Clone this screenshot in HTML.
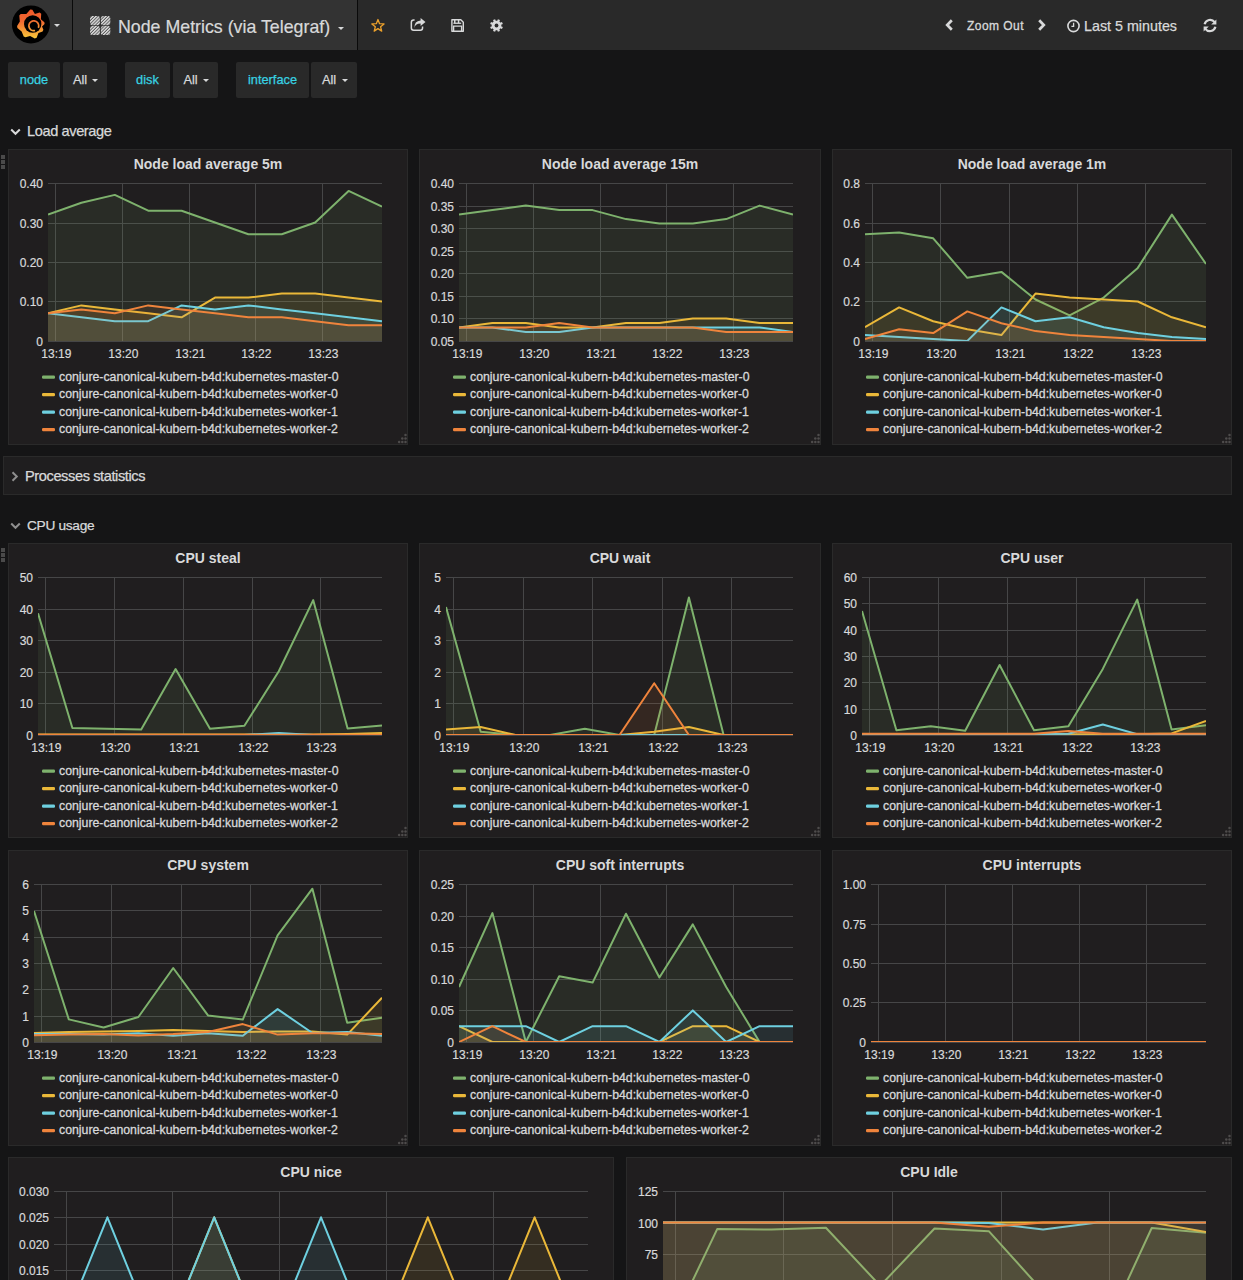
<!DOCTYPE html>
<html><head><meta charset="utf-8"><title>Node Metrics (via Telegraf)</title>
<style>
*{margin:0;padding:0;box-sizing:border-box}
html,body{width:1243px;height:1280px;overflow:hidden;background:#151516;font-family:"Liberation Sans", sans-serif;color:#d8d9da}
body{position:relative}
#nav{position:absolute;left:0;top:0;width:1243px;height:50px;background:#292929}
#navleft{position:absolute;left:0;top:0;width:357px;height:50px;background:#333333}
.vdiv{position:absolute;top:0;width:1px;height:50px;background:#0a0a0a}
.caret{position:absolute;width:0;height:0;border-left:3px solid transparent;border-right:3px solid transparent;border-top:3px solid #d8d9da}
.htitle{position:absolute;left:118px;top:16px;font-size:17.8px;line-height:22px;white-space:nowrap;color:#d8d9da;-webkit-text-stroke:0.2px #d8d9da}
.zoomout{position:absolute;left:967px;top:17.5px;font-size:12px;letter-spacing:0.45px;line-height:16px;white-space:nowrap;-webkit-text-stroke:0.3px #d8d9da}
.last5{position:absolute;left:1084px;top:17px;font-size:14.3px;line-height:18px;white-space:nowrap;-webkit-text-stroke:0.25px #d8d9da}
.vbox{position:absolute;top:62px;height:36px;background:#292929;border-radius:2px;font-size:12.8px;line-height:36px;text-align:center;white-space:nowrap;-webkit-text-stroke:0.25px currentColor}
.vl{color:#38d2e2}
.va{color:#d8d9da;position:relative;left:-5px}
.vc{position:absolute;right:9px;top:17px;width:0;height:0;border-left:3px solid transparent;border-right:3px solid transparent;border-top:3px solid #d8d9da}
.rowt{position:absolute;font-size:14.6px;letter-spacing:-0.4px;line-height:18px;white-space:nowrap;color:#d8d9da;-webkit-text-stroke:0.25px #d8d9da}
.chev{position:absolute}
#procrow{position:absolute;left:3px;top:456px;width:1229px;height:39px;background:#1f1e1f;border:1px solid #2a2a2a}
.dh{position:absolute;left:1px;width:4px;height:4px;background:#4a4a4a}
.panel{position:absolute;background:#201e1f;border:1px solid #2a2a2a;box-sizing:content-box}
svg.chart{position:absolute;overflow:visible}
.title{font-family:"Liberation Sans", sans-serif;font-size:14px;font-weight:bold;fill:#d8d9da}
.ax{font-family:"Liberation Sans", sans-serif;font-size:12px;fill:#d8d9da;stroke:#d8d9da;stroke-width:0.2px}
.lg{font-family:"Liberation Sans", sans-serif;font-size:12.3px;fill:#d8d9da;stroke:#d8d9da;stroke-width:0.3px}
.g{stroke:#464647;stroke-width:1}
</style></head>
<body>

<div id="nav"></div>
<div id="navleft"></div>
<div class="vdiv" style="left:72px"></div>
<div class="vdiv" style="left:357px"></div>
<svg style="position:absolute;left:10px;top:4px" width="42" height="42" viewBox="0 0 42 42">
  <defs><linearGradient id="lg" x1="0" y1="0" x2="0" y2="1">
    <stop offset="0" stop-color="#f05a2a"/><stop offset="0.4" stop-color="#f06832"/><stop offset="1" stop-color="#f8c83a"/></linearGradient>
    <linearGradient id="lg2" gradientUnits="userSpaceOnUse" x1="0" y1="14" x2="0" y2="28">
    <stop offset="0" stop-color="#f05e2c"/><stop offset="1" stop-color="#f5a83a"/></linearGradient></defs>
  <circle cx="20.9" cy="20.4" r="19" fill="#000"/>
  <path fill="url(#lg)" d="M20.28,5.61 L22.37,5.68 L24.89,9.96 L29.62,8.46 L31.22,9.81 L30.87,15.25 L34.39,18.20 L34.59,20.12 L32.03,22.58 L33.41,25.69 L32.58,27.40 L28.43,29.07 L26.66,33.76 L24.77,34.44 L20.10,31.98 L15.41,33.30 L13.69,32.43 L11.64,27.38 L7.41,23.94 L7.08,22.04 L9.84,17.46 L9.30,11.61 L10.66,10.10 L16.35,10.11 Z"/>
  <circle cx="22.7" cy="20.0" r="8.7" fill="#000"/>
  <path d="M25.07,26.53 L24.42,26.66 L23.76,26.70 L23.10,26.65 L22.45,26.51 L21.83,26.29 L21.24,25.98 L20.70,25.59 L20.22,25.14 L19.80,24.63 L19.45,24.06 L19.19,23.46 L19.01,22.82 L18.91,22.16 L18.91,21.50 L18.99,20.84 L19.17,20.20 L19.42,19.59 L19.76,19.02 L20.17,18.51 L20.65,18.05 L21.19,17.66 L21.77,17.34 L22.39,17.11 L23.03,16.96 L23.69,16.90 L24.35,16.93 L25.01,17.05 L25.64,17.26 L26.23,17.55 L26.78,17.91 L27.28,18.35 L27.71,18.85 L28.08,19.41 L28.36,20.00 L28.56,20.64 L28.67,21.29 L28.70,21.95 L28.63,22.61 L28.48,23.25 L28.24,23.87" fill="none" stroke="url(#lg2)" stroke-width="1.7"/>
  
</svg>
<div class="caret" style="left:54px;top:24px"></div>
<svg style="position:absolute;left:89px;top:16px" width="22" height="20" viewBox="0 0 22 20">
  <defs><pattern id="hatch" width="2.3" height="2.3" patternUnits="userSpaceOnUse" patternTransform="rotate(45)">
    <rect width="2.3" height="2.3" fill="#5a5a5a"/><rect width="1.3" height="2.3" fill="#e2e2e2"/></pattern></defs>
  <rect x="1.1" y="0.1" width="9.8" height="9.2" rx="2.2" fill="url(#hatch)"/>
  <rect x="11.9" y="0.1" width="9.4" height="9.2" rx="2.2" fill="url(#hatch)"/>
  <rect x="1.1" y="10" width="9.8" height="9.1" rx="2.2" fill="url(#hatch)"/>
  <rect x="11.9" y="10" width="9.4" height="9.1" rx="2.2" fill="url(#hatch)"/>
</svg>
<div class="htitle">Node Metrics (via Telegraf)</div>
<div class="caret" style="left:338px;top:27px"></div>
<svg style="position:absolute;left:369px;top:17px" width="18" height="17" viewBox="0 0 18 17">
  <path d="M8.95,2.50 L10.57,6.68 L15.04,6.92 L11.57,9.75 L12.71,14.08 L8.95,11.65 L5.19,14.08 L6.33,9.75 L2.86,6.92 L7.33,6.68 Z" fill="none" stroke="#eba02b" stroke-width="1.3" stroke-linejoin="round"/>
</svg>
<svg style="position:absolute;left:409px;top:17px" width="18" height="16" viewBox="0 0 18 16">
  <path d="M5.6,3.05 L4.6,3.05 Q2.35,3.05 2.35,5.3 L2.35,11 Q2.35,13.15 4.6,13.15 L11.4,13.15 Q13.55,13.15 13.55,11 L13.55,9.6" fill="none" stroke="#d8d9da" stroke-width="1.5"/>
  <path d="M5.4,11.2 Q5.8,6.6 11.6,6.4 L11.6,9.0 L16.5,5.0 L11.6,1.0 L11.6,3.5 Q5.2,3.9 5.4,11.2 Z" fill="#d8d9da"/>
</svg>
<svg style="position:absolute;left:450px;top:18px" width="16" height="16" viewBox="0 0 16 16">
  <path d="M1.9,1.8 L10.8,1.8 L13.3,4.3 L13.3,13.3 L1.9,13.3 Z" fill="none" stroke="#d8d9da" stroke-width="1.4" stroke-linejoin="round"/>
  <rect x="4.0" y="2" width="1.5" height="3.1" fill="#d8d9da"/><rect x="7.8" y="2" width="1.5" height="3.1" fill="#d8d9da"/>
  <rect x="3.4" y="4.6" width="7.8" height="1.3" fill="#d8d9da"/>
  <path d="M3.6,13.1 L3.6,8.1 L11.6,8.1 L11.6,13.1" fill="none" stroke="#d8d9da" stroke-width="1.4"/>
</svg>
<svg style="position:absolute;left:489px;top:18px" width="16" height="16" viewBox="0 0 16 16">
  <path fill="#d8d9da" d="M12.05,8.18 L13.85,8.89 L12.97,11.00 L11.20,10.23 L10.23,11.20 L11.00,12.97 L8.89,13.85 L8.18,12.05 L6.82,12.05 L6.11,13.85 L4.00,12.97 L4.77,11.20 L3.80,10.23 L2.03,11.00 L1.15,8.89 L2.95,8.18 L2.95,6.82 L1.15,6.11 L2.03,4.00 L3.80,4.77 L4.77,3.80 L4.00,2.03 L6.11,1.15 L6.82,2.95 L8.18,2.95 L8.89,1.15 L11.00,2.03 L10.23,3.80 L11.20,4.77 L12.97,4.00 L13.85,6.11 L12.05,6.82 Z"/><circle cx="7.5" cy="7.5" r="4.8" fill="#d8d9da"/><circle cx="7.5" cy="7.5" r="1.9" fill="#2a2a2a"/>
</svg>
<svg style="position:absolute;left:943px;top:18px" width="12" height="14" viewBox="0 0 12 14">
  <path d="M8.8,2.2 L4.2,7 L8.8,11.8" fill="none" stroke="#d8d9da" stroke-width="2.7"/>
</svg>
<div class="zoomout">Zoom Out</div>
<svg style="position:absolute;left:1036px;top:18px" width="12" height="14" viewBox="0 0 12 14">
  <path d="M3.2,2.2 L7.8,7 L3.2,11.8" fill="none" stroke="#d8d9da" stroke-width="2.7"/>
</svg>
<svg style="position:absolute;left:1066px;top:19px" width="15" height="14" viewBox="0 0 15 14">
  <circle cx="7.5" cy="7" r="5.6" fill="none" stroke="#d8d9da" stroke-width="1.6"/>
  <path d="M7.6,3.8 L7.6,7.3 L5.4,7.3" fill="none" stroke="#d8d9da" stroke-width="1.3"/>
</svg>
<div class="last5">Last 5 minutes</div>
<svg style="position:absolute;left:1202px;top:18px" width="16" height="15" viewBox="0 0 16 15">
  <path d="M2.6,6.2 A5.6,5.6 0 0 1 12.6,4.2" fill="none" stroke="#d8d9da" stroke-width="2.2"/>
  <path d="M14.4,1.4 L14.4,6.6 L9.2,6.6 Z" fill="#d8d9da"/>
  <path d="M13.4,8.8 A5.6,5.6 0 0 1 3.4,10.8" fill="none" stroke="#d8d9da" stroke-width="2.2"/>
  <path d="M1.6,13.6 L1.6,8.4 L6.8,8.4 Z" fill="#d8d9da"/>
</svg>


<div class="vbox" style="left:8px;width:52px"><span class="vl">node</span></div>
<div class="vbox" style="left:63px;width:44px"><span class="va">All</span><i class="vc"></i></div>
<div class="vbox" style="left:125px;width:45px"><span class="vl">disk</span></div>
<div class="vbox" style="left:173px;width:45px"><span class="va">All</span><i class="vc"></i></div>
<div class="vbox" style="left:236px;width:73px"><span class="vl">interface</span></div>
<div class="vbox" style="left:311px;width:46px"><span class="va">All</span><i class="vc"></i></div>


<svg class="chev" style="left:10px;top:128px" width="11" height="8" viewBox="0 0 11 8"><path d="M1.2,1.5 L5.5,5.8 L9.8,1.5" fill="none" stroke="#d8d9da" stroke-width="2"/></svg>
<div class="rowt" style="left:27px;top:122px">Load average</div>
<div class="dh" style="top:155px"></div><div class="dh" style="top:160px"></div><div class="dh" style="top:165px"></div>
<div id="procrow"></div>
<svg class="chev" style="left:11px;top:471px" width="8" height="11" viewBox="0 0 8 11"><path d="M1.5,1.2 L5.8,5.5 L1.5,9.8" fill="none" stroke="#8e8e8e" stroke-width="2"/></svg>
<div class="rowt" style="left:25px;top:467px">Processes statistics</div>
<svg class="chev" style="left:10px;top:522px" width="11" height="8" viewBox="0 0 11 8"><path d="M1.2,1.5 L5.5,5.8 L9.8,1.5" fill="none" stroke="#8e8e8e" stroke-width="2"/></svg>
<div class="rowt" style="left:27px;top:516.5px;font-size:13.7px;letter-spacing:-0.3px">CPU usage</div>
<div class="dh" style="top:548px"></div><div class="dh" style="top:553px"></div><div class="dh" style="top:558px"></div>

<div class="panel" style="left:8px;top:149px;width:398px;height:294px"></div>
<svg class="chart" style="left:8px;top:149px" width="400" height="296" viewBox="0 0 400 296">
<text x="200.0" y="20" class="title" text-anchor="middle">Node load average 5m</text>
<line x1="40" x2="374" y1="192.5" y2="192.5" class="g"/>
<text x="35" y="196.8" class="ax" text-anchor="end">0</text>
<line x1="40" x2="374" y1="152.5" y2="152.5" class="g"/>
<text x="35" y="156.8" class="ax" text-anchor="end">0.10</text>
<line x1="40" x2="374" y1="113.5" y2="113.5" class="g"/>
<text x="35" y="117.8" class="ax" text-anchor="end">0.20</text>
<line x1="40" x2="374" y1="74.5" y2="74.5" class="g"/>
<text x="35" y="78.8" class="ax" text-anchor="end">0.30</text>
<line x1="40" x2="374" y1="34.5" y2="34.5" class="g"/>
<text x="35" y="38.8" class="ax" text-anchor="end">0.40</text>
<line x1="47.5" x2="47.5" y1="34" y2="192" class="g"/>
<text x="48.3" y="209" class="ax" text-anchor="middle">13:19</text>
<line x1="114.5" x2="114.5" y1="34" y2="192" class="g"/>
<text x="115.3" y="209" class="ax" text-anchor="middle">13:20</text>
<line x1="181.5" x2="181.5" y1="34" y2="192" class="g"/>
<text x="182.3" y="209" class="ax" text-anchor="middle">13:21</text>
<line x1="247.5" x2="247.5" y1="34" y2="192" class="g"/>
<text x="248.3" y="209" class="ax" text-anchor="middle">13:22</text>
<line x1="314.5" x2="314.5" y1="34" y2="192" class="g"/>
<text x="315.3" y="209" class="ax" text-anchor="middle">13:23</text>
<clipPath id="c8_149"><rect x="40" y="32" width="334" height="160"/></clipPath>
<g clip-path="url(#c8_149)">
<path d="M40.0,192.0 L40.0,65.6 L73.4,53.8 L106.8,45.9 L140.2,61.7 L173.6,61.7 L207.0,73.5 L240.4,85.3 L273.8,85.3 L307.2,73.5 L340.6,41.9 L374.0,57.7 L374.0,192.0 Z" fill="#7eb26d" fill-opacity="0.1"/>
<path d="M40.0,65.6 L73.4,53.8 L106.8,45.9 L140.2,61.7 L173.6,61.7 L207.0,73.5 L240.4,85.3 L273.8,85.3 L307.2,73.5 L340.6,41.9 L374.0,57.7" fill="none" stroke="#7eb26d" stroke-width="2" stroke-linejoin="round"/>
<path d="M40.0,192.0 L40.0,164.3 L73.4,156.4 L106.8,160.4 L140.2,164.3 L173.6,168.3 L207.0,148.6 L240.4,148.6 L273.8,144.6 L307.2,144.6 L340.6,148.6 L374.0,152.5 L374.0,192.0 Z" fill="#eab839" fill-opacity="0.1"/>
<path d="M40.0,164.3 L73.4,156.4 L106.8,160.4 L140.2,164.3 L173.6,168.3 L207.0,148.6 L240.4,148.6 L273.8,144.6 L307.2,144.6 L340.6,148.6 L374.0,152.5" fill="none" stroke="#eab839" stroke-width="2" stroke-linejoin="round"/>
<path d="M40.0,192.0 L40.0,164.3 L73.4,168.3 L106.8,172.2 L140.2,172.2 L173.6,156.4 L207.0,160.4 L240.4,156.4 L273.8,160.4 L307.2,164.3 L340.6,168.3 L374.0,172.2 L374.0,192.0 Z" fill="#6ed0e0" fill-opacity="0.1"/>
<path d="M40.0,164.3 L73.4,168.3 L106.8,172.2 L140.2,172.2 L173.6,156.4 L207.0,160.4 L240.4,156.4 L273.8,160.4 L307.2,164.3 L340.6,168.3 L374.0,172.2" fill="none" stroke="#6ed0e0" stroke-width="2" stroke-linejoin="round"/>
<path d="M40.0,192.0 L40.0,164.3 L73.4,160.4 L106.8,164.3 L140.2,156.4 L173.6,160.4 L207.0,164.3 L240.4,168.3 L273.8,168.3 L307.2,172.2 L340.6,176.2 L374.0,176.2 L374.0,192.0 Z" fill="#ef843c" fill-opacity="0.1"/>
<path d="M40.0,164.3 L73.4,160.4 L106.8,164.3 L140.2,156.4 L173.6,160.4 L207.0,164.3 L240.4,168.3 L273.8,168.3 L307.2,172.2 L340.6,176.2 L374.0,176.2" fill="none" stroke="#ef843c" stroke-width="2" stroke-linejoin="round"/>
</g>
<rect x="34" y="226.5" width="13" height="3.2" rx="1.2" fill="#7eb26d"/>
<text x="51" y="231.5" class="lg">conjure-canonical-kubern-b4d:kubernetes-master-0</text>
<rect x="34" y="244.0" width="13" height="3.2" rx="1.2" fill="#eab839"/>
<text x="51" y="249.0" class="lg">conjure-canonical-kubern-b4d:kubernetes-worker-0</text>
<rect x="34" y="261.5" width="13" height="3.2" rx="1.2" fill="#6ed0e0"/>
<text x="51" y="266.5" class="lg">conjure-canonical-kubern-b4d:kubernetes-worker-1</text>
<rect x="34" y="279.0" width="13" height="3.2" rx="1.2" fill="#ef843c"/>
<text x="51" y="284.0" class="lg">conjure-canonical-kubern-b4d:kubernetes-worker-2</text>
<circle cx="397.5" cy="293" r="1.25" fill="#4e4c4c"/>
<circle cx="394.3" cy="293" r="1.25" fill="#4e4c4c"/>
<circle cx="391.1" cy="293" r="1.25" fill="#4e4c4c"/>
<circle cx="397.5" cy="289.6" r="1.25" fill="#4e4c4c"/>
<circle cx="394.3" cy="289.6" r="1.25" fill="#4e4c4c"/>
<circle cx="397.5" cy="286.1" r="1.25" fill="#4e4c4c"/>
</svg><div class="panel" style="left:419px;top:149px;width:400px;height:294px"></div>
<svg class="chart" style="left:419px;top:149px" width="402" height="296" viewBox="0 0 402 296">
<text x="201.0" y="20" class="title" text-anchor="middle">Node load average 15m</text>
<line x1="40" x2="374" y1="192.5" y2="192.5" class="g"/>
<text x="35" y="196.8" class="ax" text-anchor="end">0.05</text>
<line x1="40" x2="374" y1="169.5" y2="169.5" class="g"/>
<text x="35" y="173.8" class="ax" text-anchor="end">0.10</text>
<line x1="40" x2="374" y1="147.5" y2="147.5" class="g"/>
<text x="35" y="151.8" class="ax" text-anchor="end">0.15</text>
<line x1="40" x2="374" y1="124.5" y2="124.5" class="g"/>
<text x="35" y="128.8" class="ax" text-anchor="end">0.20</text>
<line x1="40" x2="374" y1="102.5" y2="102.5" class="g"/>
<text x="35" y="106.8" class="ax" text-anchor="end">0.25</text>
<line x1="40" x2="374" y1="79.5" y2="79.5" class="g"/>
<text x="35" y="83.8" class="ax" text-anchor="end">0.30</text>
<line x1="40" x2="374" y1="57.5" y2="57.5" class="g"/>
<text x="35" y="61.8" class="ax" text-anchor="end">0.35</text>
<line x1="40" x2="374" y1="34.5" y2="34.5" class="g"/>
<text x="35" y="38.8" class="ax" text-anchor="end">0.40</text>
<line x1="47.5" x2="47.5" y1="34" y2="192" class="g"/>
<text x="48.3" y="209" class="ax" text-anchor="middle">13:19</text>
<line x1="114.5" x2="114.5" y1="34" y2="192" class="g"/>
<text x="115.3" y="209" class="ax" text-anchor="middle">13:20</text>
<line x1="181.5" x2="181.5" y1="34" y2="192" class="g"/>
<text x="182.3" y="209" class="ax" text-anchor="middle">13:21</text>
<line x1="247.5" x2="247.5" y1="34" y2="192" class="g"/>
<text x="248.3" y="209" class="ax" text-anchor="middle">13:22</text>
<line x1="314.5" x2="314.5" y1="34" y2="192" class="g"/>
<text x="315.3" y="209" class="ax" text-anchor="middle">13:23</text>
<clipPath id="c419_149"><rect x="40" y="32" width="334" height="160"/></clipPath>
<g clip-path="url(#c419_149)">
<path d="M40.0,214.6 L40.0,65.6 L73.4,61.1 L106.8,56.6 L140.2,61.1 L173.6,61.1 L207.0,70.1 L240.4,74.6 L273.8,74.6 L307.2,70.1 L340.6,56.6 L374.0,65.6 L374.0,214.6 Z" fill="#7eb26d" fill-opacity="0.1"/>
<path d="M40.0,65.6 L73.4,61.1 L106.8,56.6 L140.2,61.1 L173.6,61.1 L207.0,70.1 L240.4,74.6 L273.8,74.6 L307.2,70.1 L340.6,56.6 L374.0,65.6" fill="none" stroke="#7eb26d" stroke-width="2" stroke-linejoin="round"/>
<path d="M40.0,214.6 L40.0,178.5 L73.4,173.9 L106.8,173.9 L140.2,178.5 L173.6,178.5 L207.0,173.9 L240.4,173.9 L273.8,169.4 L307.2,169.4 L340.6,173.9 L374.0,173.9 L374.0,214.6 Z" fill="#eab839" fill-opacity="0.1"/>
<path d="M40.0,178.5 L73.4,173.9 L106.8,173.9 L140.2,178.5 L173.6,178.5 L207.0,173.9 L240.4,173.9 L273.8,169.4 L307.2,169.4 L340.6,173.9 L374.0,173.9" fill="none" stroke="#eab839" stroke-width="2" stroke-linejoin="round"/>
<path d="M40.0,214.6 L40.0,178.5 L73.4,178.5 L106.8,183.0 L140.2,183.0 L173.6,178.5 L207.0,178.5 L240.4,178.5 L273.8,178.5 L307.2,178.5 L340.6,178.5 L374.0,183.0 L374.0,214.6 Z" fill="#6ed0e0" fill-opacity="0.1"/>
<path d="M40.0,178.5 L73.4,178.5 L106.8,183.0 L140.2,183.0 L173.6,178.5 L207.0,178.5 L240.4,178.5 L273.8,178.5 L307.2,178.5 L340.6,178.5 L374.0,183.0" fill="none" stroke="#6ed0e0" stroke-width="2" stroke-linejoin="round"/>
<path d="M40.0,214.6 L40.0,178.5 L73.4,178.5 L106.8,178.5 L140.2,173.9 L173.6,178.5 L207.0,178.5 L240.4,178.5 L273.8,178.5 L307.2,183.0 L340.6,183.0 L374.0,183.0 L374.0,214.6 Z" fill="#ef843c" fill-opacity="0.1"/>
<path d="M40.0,178.5 L73.4,178.5 L106.8,178.5 L140.2,173.9 L173.6,178.5 L207.0,178.5 L240.4,178.5 L273.8,178.5 L307.2,183.0 L340.6,183.0 L374.0,183.0" fill="none" stroke="#ef843c" stroke-width="2" stroke-linejoin="round"/>
</g>
<rect x="34" y="226.5" width="13" height="3.2" rx="1.2" fill="#7eb26d"/>
<text x="51" y="231.5" class="lg">conjure-canonical-kubern-b4d:kubernetes-master-0</text>
<rect x="34" y="244.0" width="13" height="3.2" rx="1.2" fill="#eab839"/>
<text x="51" y="249.0" class="lg">conjure-canonical-kubern-b4d:kubernetes-worker-0</text>
<rect x="34" y="261.5" width="13" height="3.2" rx="1.2" fill="#6ed0e0"/>
<text x="51" y="266.5" class="lg">conjure-canonical-kubern-b4d:kubernetes-worker-1</text>
<rect x="34" y="279.0" width="13" height="3.2" rx="1.2" fill="#ef843c"/>
<text x="51" y="284.0" class="lg">conjure-canonical-kubern-b4d:kubernetes-worker-2</text>
<circle cx="399.5" cy="293" r="1.25" fill="#4e4c4c"/>
<circle cx="396.3" cy="293" r="1.25" fill="#4e4c4c"/>
<circle cx="393.1" cy="293" r="1.25" fill="#4e4c4c"/>
<circle cx="399.5" cy="289.6" r="1.25" fill="#4e4c4c"/>
<circle cx="396.3" cy="289.6" r="1.25" fill="#4e4c4c"/>
<circle cx="399.5" cy="286.1" r="1.25" fill="#4e4c4c"/>
</svg><div class="panel" style="left:832px;top:149px;width:398px;height:294px"></div>
<svg class="chart" style="left:832px;top:149px" width="400" height="296" viewBox="0 0 400 296">
<text x="200.0" y="20" class="title" text-anchor="middle">Node load average 1m</text>
<line x1="33" x2="374" y1="192.5" y2="192.5" class="g"/>
<text x="28" y="196.8" class="ax" text-anchor="end">0</text>
<line x1="33" x2="374" y1="152.5" y2="152.5" class="g"/>
<text x="28" y="156.8" class="ax" text-anchor="end">0.2</text>
<line x1="33" x2="374" y1="113.5" y2="113.5" class="g"/>
<text x="28" y="117.8" class="ax" text-anchor="end">0.4</text>
<line x1="33" x2="374" y1="74.5" y2="74.5" class="g"/>
<text x="28" y="78.8" class="ax" text-anchor="end">0.6</text>
<line x1="33" x2="374" y1="34.5" y2="34.5" class="g"/>
<text x="28" y="38.8" class="ax" text-anchor="end">0.8</text>
<line x1="40.5" x2="40.5" y1="34" y2="192" class="g"/>
<text x="41.3" y="209" class="ax" text-anchor="middle">13:19</text>
<line x1="108.5" x2="108.5" y1="34" y2="192" class="g"/>
<text x="109.3" y="209" class="ax" text-anchor="middle">13:20</text>
<line x1="177.5" x2="177.5" y1="34" y2="192" class="g"/>
<text x="178.3" y="209" class="ax" text-anchor="middle">13:21</text>
<line x1="245.5" x2="245.5" y1="34" y2="192" class="g"/>
<text x="246.3" y="209" class="ax" text-anchor="middle">13:22</text>
<line x1="313.5" x2="313.5" y1="34" y2="192" class="g"/>
<text x="314.3" y="209" class="ax" text-anchor="middle">13:23</text>
<clipPath id="c832_149"><rect x="33" y="32" width="341" height="160"/></clipPath>
<g clip-path="url(#c832_149)">
<path d="M33.0,192.0 L33.0,85.3 L67.1,83.4 L101.2,89.3 L135.3,128.8 L169.4,122.9 L203.5,150.5 L237.6,166.3 L271.7,148.6 L305.8,118.9 L339.9,65.6 L374.0,115.0 L374.0,192.0 Z" fill="#7eb26d" fill-opacity="0.1"/>
<path d="M33.0,85.3 L67.1,83.4 L101.2,89.3 L135.3,128.8 L169.4,122.9 L203.5,150.5 L237.6,166.3 L271.7,148.6 L305.8,118.9 L339.9,65.6 L374.0,115.0" fill="none" stroke="#7eb26d" stroke-width="2" stroke-linejoin="round"/>
<path d="M33.0,192.0 L33.0,178.2 L67.1,158.4 L101.2,172.2 L135.3,180.2 L169.4,186.1 L203.5,144.6 L237.6,148.6 L271.7,150.5 L305.8,152.5 L339.9,168.3 L374.0,178.2 L374.0,192.0 Z" fill="#eab839" fill-opacity="0.1"/>
<path d="M33.0,178.2 L67.1,158.4 L101.2,172.2 L135.3,180.2 L169.4,186.1 L203.5,144.6 L237.6,148.6 L271.7,150.5 L305.8,152.5 L339.9,168.3 L374.0,178.2" fill="none" stroke="#eab839" stroke-width="2" stroke-linejoin="round"/>
<path d="M33.0,192.0 L33.0,186.1 L67.1,188.1 L101.2,190.0 L135.3,192.0 L169.4,158.4 L203.5,172.2 L237.6,168.3 L271.7,178.2 L305.8,184.1 L339.9,188.1 L374.0,190.0 L374.0,192.0 Z" fill="#6ed0e0" fill-opacity="0.1"/>
<path d="M33.0,186.1 L67.1,188.1 L101.2,190.0 L135.3,192.0 L169.4,158.4 L203.5,172.2 L237.6,168.3 L271.7,178.2 L305.8,184.1 L339.9,188.1 L374.0,190.0" fill="none" stroke="#6ed0e0" stroke-width="2" stroke-linejoin="round"/>
<path d="M33.0,192.0 L33.0,190.0 L67.1,180.2 L101.2,184.1 L135.3,162.4 L169.4,174.2 L203.5,182.1 L237.6,186.1 L271.7,188.1 L305.8,190.0 L339.9,192.0 L374.0,192.0 L374.0,192.0 Z" fill="#ef843c" fill-opacity="0.1"/>
<path d="M33.0,190.0 L67.1,180.2 L101.2,184.1 L135.3,162.4 L169.4,174.2 L203.5,182.1 L237.6,186.1 L271.7,188.1 L305.8,190.0 L339.9,192.0 L374.0,192.0" fill="none" stroke="#ef843c" stroke-width="2" stroke-linejoin="round"/>
</g>
<rect x="34" y="226.5" width="13" height="3.2" rx="1.2" fill="#7eb26d"/>
<text x="51" y="231.5" class="lg">conjure-canonical-kubern-b4d:kubernetes-master-0</text>
<rect x="34" y="244.0" width="13" height="3.2" rx="1.2" fill="#eab839"/>
<text x="51" y="249.0" class="lg">conjure-canonical-kubern-b4d:kubernetes-worker-0</text>
<rect x="34" y="261.5" width="13" height="3.2" rx="1.2" fill="#6ed0e0"/>
<text x="51" y="266.5" class="lg">conjure-canonical-kubern-b4d:kubernetes-worker-1</text>
<rect x="34" y="279.0" width="13" height="3.2" rx="1.2" fill="#ef843c"/>
<text x="51" y="284.0" class="lg">conjure-canonical-kubern-b4d:kubernetes-worker-2</text>
<circle cx="397.5" cy="293" r="1.25" fill="#4e4c4c"/>
<circle cx="394.3" cy="293" r="1.25" fill="#4e4c4c"/>
<circle cx="391.1" cy="293" r="1.25" fill="#4e4c4c"/>
<circle cx="397.5" cy="289.6" r="1.25" fill="#4e4c4c"/>
<circle cx="394.3" cy="289.6" r="1.25" fill="#4e4c4c"/>
<circle cx="397.5" cy="286.1" r="1.25" fill="#4e4c4c"/>
</svg><div class="panel" style="left:8px;top:543px;width:398px;height:293px"></div>
<svg class="chart" style="left:8px;top:543px" width="400" height="295" viewBox="0 0 400 295">
<text x="200.0" y="20" class="title" text-anchor="middle">CPU steal</text>
<line x1="30" x2="374" y1="192.5" y2="192.5" class="g"/>
<text x="25" y="196.8" class="ax" text-anchor="end">0</text>
<line x1="30" x2="374" y1="160.5" y2="160.5" class="g"/>
<text x="25" y="164.8" class="ax" text-anchor="end">10</text>
<line x1="30" x2="374" y1="129.5" y2="129.5" class="g"/>
<text x="25" y="133.8" class="ax" text-anchor="end">20</text>
<line x1="30" x2="374" y1="97.5" y2="97.5" class="g"/>
<text x="25" y="101.8" class="ax" text-anchor="end">30</text>
<line x1="30" x2="374" y1="66.5" y2="66.5" class="g"/>
<text x="25" y="70.8" class="ax" text-anchor="end">40</text>
<line x1="30" x2="374" y1="34.5" y2="34.5" class="g"/>
<text x="25" y="38.8" class="ax" text-anchor="end">50</text>
<line x1="37.5" x2="37.5" y1="34" y2="192" class="g"/>
<text x="38.3" y="209" class="ax" text-anchor="middle">13:19</text>
<line x1="106.5" x2="106.5" y1="34" y2="192" class="g"/>
<text x="107.3" y="209" class="ax" text-anchor="middle">13:20</text>
<line x1="175.5" x2="175.5" y1="34" y2="192" class="g"/>
<text x="176.3" y="209" class="ax" text-anchor="middle">13:21</text>
<line x1="244.5" x2="244.5" y1="34" y2="192" class="g"/>
<text x="245.3" y="209" class="ax" text-anchor="middle">13:22</text>
<line x1="312.5" x2="312.5" y1="34" y2="192" class="g"/>
<text x="313.3" y="209" class="ax" text-anchor="middle">13:23</text>
<clipPath id="c8_543"><rect x="30" y="32" width="344" height="160"/></clipPath>
<g clip-path="url(#c8_543)">
<path d="M30.0,192.0 L30.0,70.3 L64.4,185.0 L98.8,185.7 L133.2,186.6 L167.6,126.0 L202.0,185.7 L236.4,182.8 L270.8,128.2 L305.2,57.1 L339.6,185.4 L374.0,182.5 L374.0,192.0 Z" fill="#7eb26d" fill-opacity="0.1"/>
<path d="M30.0,70.3 L64.4,185.0 L98.8,185.7 L133.2,186.6 L167.6,126.0 L202.0,185.7 L236.4,182.8 L270.8,128.2 L305.2,57.1 L339.6,185.4 L374.0,182.5" fill="none" stroke="#7eb26d" stroke-width="2" stroke-linejoin="round"/>
<path d="M30.0,192.0 L30.0,191.4 L64.4,191.4 L98.8,191.4 L133.2,191.4 L167.6,191.4 L202.0,191.4 L236.4,191.4 L270.8,191.4 L305.2,191.4 L339.6,191.1 L374.0,190.1 L374.0,192.0 Z" fill="#eab839" fill-opacity="0.1"/>
<path d="M30.0,191.4 L64.4,191.4 L98.8,191.4 L133.2,191.4 L167.6,191.4 L202.0,191.4 L236.4,191.4 L270.8,191.4 L305.2,191.4 L339.6,191.1 L374.0,190.1" fill="none" stroke="#eab839" stroke-width="2" stroke-linejoin="round"/>
<path d="M30.0,192.0 L30.0,192.0 L64.4,192.0 L98.8,192.0 L133.2,192.0 L167.6,192.0 L202.0,192.0 L236.4,192.0 L270.8,190.1 L305.2,192.0 L339.6,192.0 L374.0,192.0 L374.0,192.0 Z" fill="#6ed0e0" fill-opacity="0.1"/>
<path d="M30.0,192.0 L64.4,192.0 L98.8,192.0 L133.2,192.0 L167.6,192.0 L202.0,192.0 L236.4,192.0 L270.8,190.1 L305.2,192.0 L339.6,192.0 L374.0,192.0" fill="none" stroke="#6ed0e0" stroke-width="2" stroke-linejoin="round"/>
<path d="M30.0,192.0 L30.0,191.7 L64.4,191.7 L98.8,191.7 L133.2,191.7 L167.6,191.7 L202.0,191.7 L236.4,191.7 L270.8,191.7 L305.2,191.7 L339.6,191.7 L374.0,191.7 L374.0,192.0 Z" fill="#ef843c" fill-opacity="0.1"/>
<path d="M30.0,191.7 L64.4,191.7 L98.8,191.7 L133.2,191.7 L167.6,191.7 L202.0,191.7 L236.4,191.7 L270.8,191.7 L305.2,191.7 L339.6,191.7 L374.0,191.7" fill="none" stroke="#ef843c" stroke-width="2" stroke-linejoin="round"/>
</g>
<rect x="34" y="226.5" width="13" height="3.2" rx="1.2" fill="#7eb26d"/>
<text x="51" y="231.5" class="lg">conjure-canonical-kubern-b4d:kubernetes-master-0</text>
<rect x="34" y="244.0" width="13" height="3.2" rx="1.2" fill="#eab839"/>
<text x="51" y="249.0" class="lg">conjure-canonical-kubern-b4d:kubernetes-worker-0</text>
<rect x="34" y="261.5" width="13" height="3.2" rx="1.2" fill="#6ed0e0"/>
<text x="51" y="266.5" class="lg">conjure-canonical-kubern-b4d:kubernetes-worker-1</text>
<rect x="34" y="279.0" width="13" height="3.2" rx="1.2" fill="#ef843c"/>
<text x="51" y="284.0" class="lg">conjure-canonical-kubern-b4d:kubernetes-worker-2</text>
<circle cx="397.5" cy="292" r="1.25" fill="#4e4c4c"/>
<circle cx="394.3" cy="292" r="1.25" fill="#4e4c4c"/>
<circle cx="391.1" cy="292" r="1.25" fill="#4e4c4c"/>
<circle cx="397.5" cy="288.6" r="1.25" fill="#4e4c4c"/>
<circle cx="394.3" cy="288.6" r="1.25" fill="#4e4c4c"/>
<circle cx="397.5" cy="285.1" r="1.25" fill="#4e4c4c"/>
</svg><div class="panel" style="left:419px;top:543px;width:400px;height:293px"></div>
<svg class="chart" style="left:419px;top:543px" width="402" height="295" viewBox="0 0 402 295">
<text x="201.0" y="20" class="title" text-anchor="middle">CPU wait</text>
<line x1="27" x2="374" y1="192.5" y2="192.5" class="g"/>
<text x="22" y="196.8" class="ax" text-anchor="end">0</text>
<line x1="27" x2="374" y1="160.5" y2="160.5" class="g"/>
<text x="22" y="164.8" class="ax" text-anchor="end">1</text>
<line x1="27" x2="374" y1="129.5" y2="129.5" class="g"/>
<text x="22" y="133.8" class="ax" text-anchor="end">2</text>
<line x1="27" x2="374" y1="97.5" y2="97.5" class="g"/>
<text x="22" y="101.8" class="ax" text-anchor="end">3</text>
<line x1="27" x2="374" y1="66.5" y2="66.5" class="g"/>
<text x="22" y="70.8" class="ax" text-anchor="end">4</text>
<line x1="27" x2="374" y1="34.5" y2="34.5" class="g"/>
<text x="22" y="38.8" class="ax" text-anchor="end">5</text>
<line x1="34.5" x2="34.5" y1="34" y2="192" class="g"/>
<text x="35.3" y="209" class="ax" text-anchor="middle">13:19</text>
<line x1="104.5" x2="104.5" y1="34" y2="192" class="g"/>
<text x="105.3" y="209" class="ax" text-anchor="middle">13:20</text>
<line x1="173.5" x2="173.5" y1="34" y2="192" class="g"/>
<text x="174.3" y="209" class="ax" text-anchor="middle">13:21</text>
<line x1="243.5" x2="243.5" y1="34" y2="192" class="g"/>
<text x="244.3" y="209" class="ax" text-anchor="middle">13:22</text>
<line x1="312.5" x2="312.5" y1="34" y2="192" class="g"/>
<text x="313.3" y="209" class="ax" text-anchor="middle">13:23</text>
<clipPath id="c419_543"><rect x="27" y="32" width="347" height="160"/></clipPath>
<g clip-path="url(#c419_543)">
<path d="M27.0,192.0 L27.0,64.0 L61.7,188.8 L96.4,192.0 L131.1,192.0 L165.8,185.7 L200.5,192.0 L235.2,192.0 L269.9,54.5 L304.6,192.0 L339.3,192.0 L374.0,192.0 L374.0,192.0 Z" fill="#7eb26d" fill-opacity="0.1"/>
<path d="M27.0,64.0 L61.7,188.8 L96.4,192.0 L131.1,192.0 L165.8,185.7 L200.5,192.0 L235.2,192.0 L269.9,54.5 L304.6,192.0 L339.3,192.0 L374.0,192.0" fill="none" stroke="#7eb26d" stroke-width="2" stroke-linejoin="round"/>
<path d="M27.0,192.0 L27.0,186.6 L61.7,184.1 L96.4,192.0 L131.1,192.0 L165.8,192.0 L200.5,192.0 L235.2,188.8 L269.9,184.1 L304.6,192.0 L339.3,192.0 L374.0,192.0 L374.0,192.0 Z" fill="#eab839" fill-opacity="0.1"/>
<path d="M27.0,186.6 L61.7,184.1 L96.4,192.0 L131.1,192.0 L165.8,192.0 L200.5,192.0 L235.2,188.8 L269.9,184.1 L304.6,192.0 L339.3,192.0 L374.0,192.0" fill="none" stroke="#eab839" stroke-width="2" stroke-linejoin="round"/>
<path d="M27.0,192.0 L27.0,192.0 L61.7,192.0 L96.4,192.0 L131.1,192.0 L165.8,192.0 L200.5,192.0 L235.2,192.0 L269.9,192.0 L304.6,192.0 L339.3,192.0 L374.0,192.0 L374.0,192.0 Z" fill="#6ed0e0" fill-opacity="0.1"/>
<path d="M27.0,192.0 L61.7,192.0 L96.4,192.0 L131.1,192.0 L165.8,192.0 L200.5,192.0 L235.2,192.0 L269.9,192.0 L304.6,192.0 L339.3,192.0 L374.0,192.0" fill="none" stroke="#6ed0e0" stroke-width="2" stroke-linejoin="round"/>
<path d="M27.0,192.0 L27.0,192.0 L61.7,192.0 L96.4,192.0 L131.1,192.0 L165.8,192.0 L200.5,192.0 L235.2,140.2 L269.9,192.0 L304.6,192.0 L339.3,192.0 L374.0,192.0 L374.0,192.0 Z" fill="#ef843c" fill-opacity="0.1"/>
<path d="M27.0,192.0 L61.7,192.0 L96.4,192.0 L131.1,192.0 L165.8,192.0 L200.5,192.0 L235.2,140.2 L269.9,192.0 L304.6,192.0 L339.3,192.0 L374.0,192.0" fill="none" stroke="#ef843c" stroke-width="2" stroke-linejoin="round"/>
</g>
<rect x="34" y="226.5" width="13" height="3.2" rx="1.2" fill="#7eb26d"/>
<text x="51" y="231.5" class="lg">conjure-canonical-kubern-b4d:kubernetes-master-0</text>
<rect x="34" y="244.0" width="13" height="3.2" rx="1.2" fill="#eab839"/>
<text x="51" y="249.0" class="lg">conjure-canonical-kubern-b4d:kubernetes-worker-0</text>
<rect x="34" y="261.5" width="13" height="3.2" rx="1.2" fill="#6ed0e0"/>
<text x="51" y="266.5" class="lg">conjure-canonical-kubern-b4d:kubernetes-worker-1</text>
<rect x="34" y="279.0" width="13" height="3.2" rx="1.2" fill="#ef843c"/>
<text x="51" y="284.0" class="lg">conjure-canonical-kubern-b4d:kubernetes-worker-2</text>
<circle cx="399.5" cy="292" r="1.25" fill="#4e4c4c"/>
<circle cx="396.3" cy="292" r="1.25" fill="#4e4c4c"/>
<circle cx="393.1" cy="292" r="1.25" fill="#4e4c4c"/>
<circle cx="399.5" cy="288.6" r="1.25" fill="#4e4c4c"/>
<circle cx="396.3" cy="288.6" r="1.25" fill="#4e4c4c"/>
<circle cx="399.5" cy="285.1" r="1.25" fill="#4e4c4c"/>
</svg><div class="panel" style="left:832px;top:543px;width:398px;height:293px"></div>
<svg class="chart" style="left:832px;top:543px" width="400" height="295" viewBox="0 0 400 295">
<text x="200.0" y="20" class="title" text-anchor="middle">CPU user</text>
<line x1="30" x2="374" y1="192.5" y2="192.5" class="g"/>
<text x="25" y="196.8" class="ax" text-anchor="end">0</text>
<line x1="30" x2="374" y1="166.5" y2="166.5" class="g"/>
<text x="25" y="170.8" class="ax" text-anchor="end">10</text>
<line x1="30" x2="374" y1="139.5" y2="139.5" class="g"/>
<text x="25" y="143.8" class="ax" text-anchor="end">20</text>
<line x1="30" x2="374" y1="113.5" y2="113.5" class="g"/>
<text x="25" y="117.8" class="ax" text-anchor="end">30</text>
<line x1="30" x2="374" y1="87.5" y2="87.5" class="g"/>
<text x="25" y="91.8" class="ax" text-anchor="end">40</text>
<line x1="30" x2="374" y1="60.5" y2="60.5" class="g"/>
<text x="25" y="64.8" class="ax" text-anchor="end">50</text>
<line x1="30" x2="374" y1="34.5" y2="34.5" class="g"/>
<text x="25" y="38.8" class="ax" text-anchor="end">60</text>
<line x1="37.5" x2="37.5" y1="34" y2="192" class="g"/>
<text x="38.3" y="209" class="ax" text-anchor="middle">13:19</text>
<line x1="106.5" x2="106.5" y1="34" y2="192" class="g"/>
<text x="107.3" y="209" class="ax" text-anchor="middle">13:20</text>
<line x1="175.5" x2="175.5" y1="34" y2="192" class="g"/>
<text x="176.3" y="209" class="ax" text-anchor="middle">13:21</text>
<line x1="244.5" x2="244.5" y1="34" y2="192" class="g"/>
<text x="245.3" y="209" class="ax" text-anchor="middle">13:22</text>
<line x1="312.5" x2="312.5" y1="34" y2="192" class="g"/>
<text x="313.3" y="209" class="ax" text-anchor="middle">13:23</text>
<clipPath id="c832_543"><rect x="30" y="32" width="344" height="160"/></clipPath>
<g clip-path="url(#c832_543)">
<path d="M30.0,192.0 L30.0,68.0 L64.4,187.3 L98.8,183.3 L133.2,187.8 L167.6,122.0 L202.0,187.3 L236.4,183.3 L270.8,125.9 L305.2,56.6 L339.6,186.5 L374.0,182.3 L374.0,192.0 Z" fill="#7eb26d" fill-opacity="0.1"/>
<path d="M30.0,68.0 L64.4,187.3 L98.8,183.3 L133.2,187.8 L167.6,122.0 L202.0,187.3 L236.4,183.3 L270.8,125.9 L305.2,56.6 L339.6,186.5 L374.0,182.3" fill="none" stroke="#7eb26d" stroke-width="2" stroke-linejoin="round"/>
<path d="M30.0,192.0 L30.0,191.2 L64.4,191.2 L98.8,191.2 L133.2,191.2 L167.6,191.2 L202.0,191.2 L236.4,191.2 L270.8,191.2 L305.2,191.2 L339.6,190.4 L374.0,178.0 L374.0,192.0 Z" fill="#eab839" fill-opacity="0.1"/>
<path d="M30.0,191.2 L64.4,191.2 L98.8,191.2 L133.2,191.2 L167.6,191.2 L202.0,191.2 L236.4,191.2 L270.8,191.2 L305.2,191.2 L339.6,190.4 L374.0,178.0" fill="none" stroke="#eab839" stroke-width="2" stroke-linejoin="round"/>
<path d="M30.0,192.0 L30.0,191.2 L64.4,191.2 L98.8,191.2 L133.2,191.2 L167.6,191.2 L202.0,191.2 L236.4,190.7 L270.8,181.5 L305.2,191.2 L339.6,191.2 L374.0,191.2 L374.0,192.0 Z" fill="#6ed0e0" fill-opacity="0.1"/>
<path d="M30.0,191.2 L64.4,191.2 L98.8,191.2 L133.2,191.2 L167.6,191.2 L202.0,191.2 L236.4,190.7 L270.8,181.5 L305.2,191.2 L339.6,191.2 L374.0,191.2" fill="none" stroke="#6ed0e0" stroke-width="2" stroke-linejoin="round"/>
<path d="M30.0,192.0 L30.0,190.7 L64.4,190.7 L98.8,190.7 L133.2,190.7 L167.6,190.7 L202.0,190.7 L236.4,188.1 L270.8,190.7 L305.2,190.7 L339.6,190.7 L374.0,190.7 L374.0,192.0 Z" fill="#ef843c" fill-opacity="0.1"/>
<path d="M30.0,190.7 L64.4,190.7 L98.8,190.7 L133.2,190.7 L167.6,190.7 L202.0,190.7 L236.4,188.1 L270.8,190.7 L305.2,190.7 L339.6,190.7 L374.0,190.7" fill="none" stroke="#ef843c" stroke-width="2" stroke-linejoin="round"/>
</g>
<rect x="34" y="226.5" width="13" height="3.2" rx="1.2" fill="#7eb26d"/>
<text x="51" y="231.5" class="lg">conjure-canonical-kubern-b4d:kubernetes-master-0</text>
<rect x="34" y="244.0" width="13" height="3.2" rx="1.2" fill="#eab839"/>
<text x="51" y="249.0" class="lg">conjure-canonical-kubern-b4d:kubernetes-worker-0</text>
<rect x="34" y="261.5" width="13" height="3.2" rx="1.2" fill="#6ed0e0"/>
<text x="51" y="266.5" class="lg">conjure-canonical-kubern-b4d:kubernetes-worker-1</text>
<rect x="34" y="279.0" width="13" height="3.2" rx="1.2" fill="#ef843c"/>
<text x="51" y="284.0" class="lg">conjure-canonical-kubern-b4d:kubernetes-worker-2</text>
<circle cx="397.5" cy="292" r="1.25" fill="#4e4c4c"/>
<circle cx="394.3" cy="292" r="1.25" fill="#4e4c4c"/>
<circle cx="391.1" cy="292" r="1.25" fill="#4e4c4c"/>
<circle cx="397.5" cy="288.6" r="1.25" fill="#4e4c4c"/>
<circle cx="394.3" cy="288.6" r="1.25" fill="#4e4c4c"/>
<circle cx="397.5" cy="285.1" r="1.25" fill="#4e4c4c"/>
</svg><div class="panel" style="left:8px;top:850px;width:398px;height:294px"></div>
<svg class="chart" style="left:8px;top:850px" width="400" height="296" viewBox="0 0 400 296">
<text x="200.0" y="20" class="title" text-anchor="middle">CPU system</text>
<line x1="26" x2="374" y1="192.5" y2="192.5" class="g"/>
<text x="21" y="196.8" class="ax" text-anchor="end">0</text>
<line x1="26" x2="374" y1="166.5" y2="166.5" class="g"/>
<text x="21" y="170.8" class="ax" text-anchor="end">1</text>
<line x1="26" x2="374" y1="139.5" y2="139.5" class="g"/>
<text x="21" y="143.8" class="ax" text-anchor="end">2</text>
<line x1="26" x2="374" y1="113.5" y2="113.5" class="g"/>
<text x="21" y="117.8" class="ax" text-anchor="end">3</text>
<line x1="26" x2="374" y1="87.5" y2="87.5" class="g"/>
<text x="21" y="91.8" class="ax" text-anchor="end">4</text>
<line x1="26" x2="374" y1="60.5" y2="60.5" class="g"/>
<text x="21" y="64.8" class="ax" text-anchor="end">5</text>
<line x1="26" x2="374" y1="34.5" y2="34.5" class="g"/>
<text x="21" y="38.8" class="ax" text-anchor="end">6</text>
<line x1="33.5" x2="33.5" y1="34" y2="192" class="g"/>
<text x="34.3" y="209" class="ax" text-anchor="middle">13:19</text>
<line x1="103.5" x2="103.5" y1="34" y2="192" class="g"/>
<text x="104.3" y="209" class="ax" text-anchor="middle">13:20</text>
<line x1="173.5" x2="173.5" y1="34" y2="192" class="g"/>
<text x="174.3" y="209" class="ax" text-anchor="middle">13:21</text>
<line x1="242.5" x2="242.5" y1="34" y2="192" class="g"/>
<text x="243.3" y="209" class="ax" text-anchor="middle">13:22</text>
<line x1="312.5" x2="312.5" y1="34" y2="192" class="g"/>
<text x="313.3" y="209" class="ax" text-anchor="middle">13:23</text>
<clipPath id="c8_850"><rect x="26" y="32" width="348" height="160"/></clipPath>
<g clip-path="url(#c8_850)">
<path d="M26.0,192.0 L26.0,61.1 L60.8,169.4 L95.6,177.5 L130.4,167.0 L165.2,118.0 L200.0,165.4 L234.8,169.6 L269.6,85.4 L304.4,38.7 L339.2,172.8 L374.0,167.8 L374.0,192.0 Z" fill="#7eb26d" fill-opacity="0.1"/>
<path d="M26.0,61.1 L60.8,169.4 L95.6,177.5 L130.4,167.0 L165.2,118.0 L200.0,165.4 L234.8,169.6 L269.6,85.4 L304.4,38.7 L339.2,172.8 L374.0,167.8" fill="none" stroke="#7eb26d" stroke-width="2" stroke-linejoin="round"/>
<path d="M26.0,192.0 L26.0,183.0 L60.8,182.0 L95.6,181.5 L130.4,180.9 L165.2,179.9 L200.0,180.9 L234.8,182.0 L269.6,181.5 L304.4,181.5 L339.2,184.6 L374.0,147.8 L374.0,192.0 Z" fill="#eab839" fill-opacity="0.1"/>
<path d="M26.0,183.0 L60.8,182.0 L95.6,181.5 L130.4,180.9 L165.2,179.9 L200.0,180.9 L234.8,182.0 L269.6,181.5 L304.4,181.5 L339.2,184.6 L374.0,147.8" fill="none" stroke="#eab839" stroke-width="2" stroke-linejoin="round"/>
<path d="M26.0,192.0 L26.0,184.1 L60.8,184.1 L95.6,184.6 L130.4,183.3 L165.2,185.7 L200.0,183.3 L234.8,185.7 L269.6,159.1 L304.4,183.0 L339.2,182.0 L374.0,185.7 L374.0,192.0 Z" fill="#6ed0e0" fill-opacity="0.1"/>
<path d="M26.0,184.1 L60.8,184.1 L95.6,184.6 L130.4,183.3 L165.2,185.7 L200.0,183.3 L234.8,185.7 L269.6,159.1 L304.4,183.0 L339.2,182.0 L374.0,185.7" fill="none" stroke="#6ed0e0" stroke-width="2" stroke-linejoin="round"/>
<path d="M26.0,192.0 L26.0,185.2 L60.8,184.6 L95.6,184.1 L130.4,185.4 L165.2,184.1 L200.0,182.0 L234.8,174.1 L269.6,184.6 L304.4,183.3 L339.2,183.3 L374.0,184.1 L374.0,192.0 Z" fill="#ef843c" fill-opacity="0.1"/>
<path d="M26.0,185.2 L60.8,184.6 L95.6,184.1 L130.4,185.4 L165.2,184.1 L200.0,182.0 L234.8,174.1 L269.6,184.6 L304.4,183.3 L339.2,183.3 L374.0,184.1" fill="none" stroke="#ef843c" stroke-width="2" stroke-linejoin="round"/>
</g>
<rect x="34" y="226.5" width="13" height="3.2" rx="1.2" fill="#7eb26d"/>
<text x="51" y="231.5" class="lg">conjure-canonical-kubern-b4d:kubernetes-master-0</text>
<rect x="34" y="244.0" width="13" height="3.2" rx="1.2" fill="#eab839"/>
<text x="51" y="249.0" class="lg">conjure-canonical-kubern-b4d:kubernetes-worker-0</text>
<rect x="34" y="261.5" width="13" height="3.2" rx="1.2" fill="#6ed0e0"/>
<text x="51" y="266.5" class="lg">conjure-canonical-kubern-b4d:kubernetes-worker-1</text>
<rect x="34" y="279.0" width="13" height="3.2" rx="1.2" fill="#ef843c"/>
<text x="51" y="284.0" class="lg">conjure-canonical-kubern-b4d:kubernetes-worker-2</text>
<circle cx="397.5" cy="293" r="1.25" fill="#4e4c4c"/>
<circle cx="394.3" cy="293" r="1.25" fill="#4e4c4c"/>
<circle cx="391.1" cy="293" r="1.25" fill="#4e4c4c"/>
<circle cx="397.5" cy="289.6" r="1.25" fill="#4e4c4c"/>
<circle cx="394.3" cy="289.6" r="1.25" fill="#4e4c4c"/>
<circle cx="397.5" cy="286.1" r="1.25" fill="#4e4c4c"/>
</svg><div class="panel" style="left:419px;top:850px;width:400px;height:294px"></div>
<svg class="chart" style="left:419px;top:850px" width="402" height="296" viewBox="0 0 402 296">
<text x="201.0" y="20" class="title" text-anchor="middle">CPU soft interrupts</text>
<line x1="40" x2="374" y1="192.5" y2="192.5" class="g"/>
<text x="35" y="196.8" class="ax" text-anchor="end">0</text>
<line x1="40" x2="374" y1="160.5" y2="160.5" class="g"/>
<text x="35" y="164.8" class="ax" text-anchor="end">0.05</text>
<line x1="40" x2="374" y1="129.5" y2="129.5" class="g"/>
<text x="35" y="133.8" class="ax" text-anchor="end">0.10</text>
<line x1="40" x2="374" y1="97.5" y2="97.5" class="g"/>
<text x="35" y="101.8" class="ax" text-anchor="end">0.15</text>
<line x1="40" x2="374" y1="66.5" y2="66.5" class="g"/>
<text x="35" y="70.8" class="ax" text-anchor="end">0.20</text>
<line x1="40" x2="374" y1="34.5" y2="34.5" class="g"/>
<text x="35" y="38.8" class="ax" text-anchor="end">0.25</text>
<line x1="47.5" x2="47.5" y1="34" y2="192" class="g"/>
<text x="48.3" y="209" class="ax" text-anchor="middle">13:19</text>
<line x1="114.5" x2="114.5" y1="34" y2="192" class="g"/>
<text x="115.3" y="209" class="ax" text-anchor="middle">13:20</text>
<line x1="181.5" x2="181.5" y1="34" y2="192" class="g"/>
<text x="182.3" y="209" class="ax" text-anchor="middle">13:21</text>
<line x1="247.5" x2="247.5" y1="34" y2="192" class="g"/>
<text x="248.3" y="209" class="ax" text-anchor="middle">13:22</text>
<line x1="314.5" x2="314.5" y1="34" y2="192" class="g"/>
<text x="315.3" y="209" class="ax" text-anchor="middle">13:23</text>
<clipPath id="c419_850"><rect x="40" y="32" width="334" height="160"/></clipPath>
<g clip-path="url(#c419_850)">
<path d="M40.0,192.0 L40.0,137.0 L73.4,63.1 L106.8,192.0 L140.2,126.3 L173.6,132.6 L207.0,63.7 L240.4,127.5 L273.8,74.4 L307.2,137.0 L340.6,192.0 L374.0,192.0 L374.0,192.0 Z" fill="#7eb26d" fill-opacity="0.1"/>
<path d="M40.0,137.0 L73.4,63.1 L106.8,192.0 L140.2,126.3 L173.6,132.6 L207.0,63.7 L240.4,127.5 L273.8,74.4 L307.2,137.0 L340.6,192.0 L374.0,192.0" fill="none" stroke="#7eb26d" stroke-width="2" stroke-linejoin="round"/>
<path d="M40.0,192.0 L40.0,176.2 L73.4,192.0 L106.8,192.0 L140.2,192.0 L173.6,192.0 L207.0,192.0 L240.4,192.0 L273.8,176.2 L307.2,176.2 L340.6,192.0 L374.0,192.0 L374.0,192.0 Z" fill="#eab839" fill-opacity="0.1"/>
<path d="M40.0,176.2 L73.4,192.0 L106.8,192.0 L140.2,192.0 L173.6,192.0 L207.0,192.0 L240.4,192.0 L273.8,176.2 L307.2,176.2 L340.6,192.0 L374.0,192.0" fill="none" stroke="#eab839" stroke-width="2" stroke-linejoin="round"/>
<path d="M40.0,192.0 L40.0,176.2 L73.4,176.2 L106.8,176.2 L140.2,192.0 L173.6,176.2 L207.0,176.2 L240.4,192.0 L273.8,160.4 L307.2,192.0 L340.6,176.2 L374.0,176.2 L374.0,192.0 Z" fill="#6ed0e0" fill-opacity="0.1"/>
<path d="M40.0,176.2 L73.4,176.2 L106.8,176.2 L140.2,192.0 L173.6,176.2 L207.0,176.2 L240.4,192.0 L273.8,160.4 L307.2,192.0 L340.6,176.2 L374.0,176.2" fill="none" stroke="#6ed0e0" stroke-width="2" stroke-linejoin="round"/>
<path d="M40.0,192.0 L40.0,192.0 L73.4,176.2 L106.8,192.0 L140.2,192.0 L173.6,192.0 L207.0,192.0 L240.4,192.0 L273.8,192.0 L307.2,192.0 L340.6,192.0 L374.0,192.0 L374.0,192.0 Z" fill="#ef843c" fill-opacity="0.1"/>
<path d="M40.0,192.0 L73.4,176.2 L106.8,192.0 L140.2,192.0 L173.6,192.0 L207.0,192.0 L240.4,192.0 L273.8,192.0 L307.2,192.0 L340.6,192.0 L374.0,192.0" fill="none" stroke="#ef843c" stroke-width="2" stroke-linejoin="round"/>
</g>
<rect x="34" y="226.5" width="13" height="3.2" rx="1.2" fill="#7eb26d"/>
<text x="51" y="231.5" class="lg">conjure-canonical-kubern-b4d:kubernetes-master-0</text>
<rect x="34" y="244.0" width="13" height="3.2" rx="1.2" fill="#eab839"/>
<text x="51" y="249.0" class="lg">conjure-canonical-kubern-b4d:kubernetes-worker-0</text>
<rect x="34" y="261.5" width="13" height="3.2" rx="1.2" fill="#6ed0e0"/>
<text x="51" y="266.5" class="lg">conjure-canonical-kubern-b4d:kubernetes-worker-1</text>
<rect x="34" y="279.0" width="13" height="3.2" rx="1.2" fill="#ef843c"/>
<text x="51" y="284.0" class="lg">conjure-canonical-kubern-b4d:kubernetes-worker-2</text>
<circle cx="399.5" cy="293" r="1.25" fill="#4e4c4c"/>
<circle cx="396.3" cy="293" r="1.25" fill="#4e4c4c"/>
<circle cx="393.1" cy="293" r="1.25" fill="#4e4c4c"/>
<circle cx="399.5" cy="289.6" r="1.25" fill="#4e4c4c"/>
<circle cx="396.3" cy="289.6" r="1.25" fill="#4e4c4c"/>
<circle cx="399.5" cy="286.1" r="1.25" fill="#4e4c4c"/>
</svg><div class="panel" style="left:832px;top:850px;width:398px;height:294px"></div>
<svg class="chart" style="left:832px;top:850px" width="400" height="296" viewBox="0 0 400 296">
<text x="200.0" y="20" class="title" text-anchor="middle">CPU interrupts</text>
<line x1="39" x2="374" y1="192.5" y2="192.5" class="g"/>
<text x="34" y="196.8" class="ax" text-anchor="end">0</text>
<line x1="39" x2="374" y1="152.5" y2="152.5" class="g"/>
<text x="34" y="156.8" class="ax" text-anchor="end">0.25</text>
<line x1="39" x2="374" y1="113.5" y2="113.5" class="g"/>
<text x="34" y="117.8" class="ax" text-anchor="end">0.50</text>
<line x1="39" x2="374" y1="74.5" y2="74.5" class="g"/>
<text x="34" y="78.8" class="ax" text-anchor="end">0.75</text>
<line x1="39" x2="374" y1="34.5" y2="34.5" class="g"/>
<text x="34" y="38.8" class="ax" text-anchor="end">1.00</text>
<line x1="46.5" x2="46.5" y1="34" y2="192" class="g"/>
<text x="47.3" y="209" class="ax" text-anchor="middle">13:19</text>
<line x1="113.5" x2="113.5" y1="34" y2="192" class="g"/>
<text x="114.3" y="209" class="ax" text-anchor="middle">13:20</text>
<line x1="180.5" x2="180.5" y1="34" y2="192" class="g"/>
<text x="181.3" y="209" class="ax" text-anchor="middle">13:21</text>
<line x1="247.5" x2="247.5" y1="34" y2="192" class="g"/>
<text x="248.3" y="209" class="ax" text-anchor="middle">13:22</text>
<line x1="314.5" x2="314.5" y1="34" y2="192" class="g"/>
<text x="315.3" y="209" class="ax" text-anchor="middle">13:23</text>
<clipPath id="c832_850"><rect x="39" y="32" width="335" height="160"/></clipPath>
<g clip-path="url(#c832_850)">
<path d="M39.0,192.0 L39.0,192.0 L72.5,192.0 L106.0,192.0 L139.5,192.0 L173.0,192.0 L206.5,192.0 L240.0,192.0 L273.5,192.0 L307.0,192.0 L340.5,192.0 L374.0,192.0 L374.0,192.0 Z" fill="#7eb26d" fill-opacity="0.1"/>
<path d="M39.0,192.0 L72.5,192.0 L106.0,192.0 L139.5,192.0 L173.0,192.0 L206.5,192.0 L240.0,192.0 L273.5,192.0 L307.0,192.0 L340.5,192.0 L374.0,192.0" fill="none" stroke="#7eb26d" stroke-width="2" stroke-linejoin="round"/>
<path d="M39.0,192.0 L39.0,192.0 L72.5,192.0 L106.0,192.0 L139.5,192.0 L173.0,192.0 L206.5,192.0 L240.0,192.0 L273.5,192.0 L307.0,192.0 L340.5,192.0 L374.0,192.0 L374.0,192.0 Z" fill="#eab839" fill-opacity="0.1"/>
<path d="M39.0,192.0 L72.5,192.0 L106.0,192.0 L139.5,192.0 L173.0,192.0 L206.5,192.0 L240.0,192.0 L273.5,192.0 L307.0,192.0 L340.5,192.0 L374.0,192.0" fill="none" stroke="#eab839" stroke-width="2" stroke-linejoin="round"/>
<path d="M39.0,192.0 L39.0,192.0 L72.5,192.0 L106.0,192.0 L139.5,192.0 L173.0,192.0 L206.5,192.0 L240.0,192.0 L273.5,192.0 L307.0,192.0 L340.5,192.0 L374.0,192.0 L374.0,192.0 Z" fill="#6ed0e0" fill-opacity="0.1"/>
<path d="M39.0,192.0 L72.5,192.0 L106.0,192.0 L139.5,192.0 L173.0,192.0 L206.5,192.0 L240.0,192.0 L273.5,192.0 L307.0,192.0 L340.5,192.0 L374.0,192.0" fill="none" stroke="#6ed0e0" stroke-width="2" stroke-linejoin="round"/>
<path d="M39.0,192.0 L39.0,192.0 L72.5,192.0 L106.0,192.0 L139.5,192.0 L173.0,192.0 L206.5,192.0 L240.0,192.0 L273.5,192.0 L307.0,192.0 L340.5,192.0 L374.0,192.0 L374.0,192.0 Z" fill="#ef843c" fill-opacity="0.1"/>
<path d="M39.0,192.0 L72.5,192.0 L106.0,192.0 L139.5,192.0 L173.0,192.0 L206.5,192.0 L240.0,192.0 L273.5,192.0 L307.0,192.0 L340.5,192.0 L374.0,192.0" fill="none" stroke="#ef843c" stroke-width="2" stroke-linejoin="round"/>
</g>
<rect x="34" y="226.5" width="13" height="3.2" rx="1.2" fill="#7eb26d"/>
<text x="51" y="231.5" class="lg">conjure-canonical-kubern-b4d:kubernetes-master-0</text>
<rect x="34" y="244.0" width="13" height="3.2" rx="1.2" fill="#eab839"/>
<text x="51" y="249.0" class="lg">conjure-canonical-kubern-b4d:kubernetes-worker-0</text>
<rect x="34" y="261.5" width="13" height="3.2" rx="1.2" fill="#6ed0e0"/>
<text x="51" y="266.5" class="lg">conjure-canonical-kubern-b4d:kubernetes-worker-1</text>
<rect x="34" y="279.0" width="13" height="3.2" rx="1.2" fill="#ef843c"/>
<text x="51" y="284.0" class="lg">conjure-canonical-kubern-b4d:kubernetes-worker-2</text>
<circle cx="397.5" cy="293" r="1.25" fill="#4e4c4c"/>
<circle cx="394.3" cy="293" r="1.25" fill="#4e4c4c"/>
<circle cx="391.1" cy="293" r="1.25" fill="#4e4c4c"/>
<circle cx="397.5" cy="289.6" r="1.25" fill="#4e4c4c"/>
<circle cx="394.3" cy="289.6" r="1.25" fill="#4e4c4c"/>
<circle cx="397.5" cy="286.1" r="1.25" fill="#4e4c4c"/>
</svg><div class="panel" style="left:8px;top:1157px;width:604px;height:294px"></div>
<svg class="chart" style="left:8px;top:1157px" width="606" height="296" viewBox="0 0 606 296">
<text x="303.0" y="20" class="title" text-anchor="middle">CPU nice</text>
<line x1="46" x2="580" y1="192.5" y2="192.5" class="g"/>
<text x="41" y="196.8" class="ax" text-anchor="end">0</text>
<line x1="46" x2="580" y1="166.5" y2="166.5" class="g"/>
<text x="41" y="170.8" class="ax" text-anchor="end">0.005</text>
<line x1="46" x2="580" y1="139.5" y2="139.5" class="g"/>
<text x="41" y="143.8" class="ax" text-anchor="end">0.010</text>
<line x1="46" x2="580" y1="113.5" y2="113.5" class="g"/>
<text x="41" y="117.8" class="ax" text-anchor="end">0.015</text>
<line x1="46" x2="580" y1="87.5" y2="87.5" class="g"/>
<text x="41" y="91.8" class="ax" text-anchor="end">0.020</text>
<line x1="46" x2="580" y1="60.5" y2="60.5" class="g"/>
<text x="41" y="64.8" class="ax" text-anchor="end">0.025</text>
<line x1="46" x2="580" y1="34.5" y2="34.5" class="g"/>
<text x="41" y="38.8" class="ax" text-anchor="end">0.030</text>
<line x1="58.5" x2="58.5" y1="34" y2="192" class="g"/>
<text x="59.3" y="209" class="ax" text-anchor="middle">13:19</text>
<line x1="164.5" x2="164.5" y1="34" y2="192" class="g"/>
<text x="165.3" y="209" class="ax" text-anchor="middle">13:20</text>
<line x1="271.5" x2="271.5" y1="34" y2="192" class="g"/>
<text x="272.3" y="209" class="ax" text-anchor="middle">13:21</text>
<line x1="378.5" x2="378.5" y1="34" y2="192" class="g"/>
<text x="379.3" y="209" class="ax" text-anchor="middle">13:22</text>
<line x1="485.5" x2="485.5" y1="34" y2="192" class="g"/>
<text x="486.3" y="209" class="ax" text-anchor="middle">13:23</text>
<clipPath id="c8_1157"><rect x="46" y="32" width="534" height="160"/></clipPath>
<g clip-path="url(#c8_1157)">
<path d="M46.0,192.0 L46.0,192.0 L99.4,192.0 L152.8,192.0 L206.2,192.0 L259.6,192.0 L313.0,192.0 L366.4,192.0 L419.8,192.0 L473.2,192.0 L526.6,192.0 L580.0,192.0 L580.0,192.0 Z" fill="#7eb26d" fill-opacity="0.1"/>
<path d="M46.0,192.0 L99.4,192.0 L152.8,192.0 L206.2,192.0 L259.6,192.0 L313.0,192.0 L366.4,192.0 L419.8,192.0 L473.2,192.0 L526.6,192.0 L580.0,192.0" fill="none" stroke="#7eb26d" stroke-width="2" stroke-linejoin="round"/>
<path d="M46.0,192.0 L46.0,192.0 L99.4,192.0 L152.8,192.0 L206.2,60.3 L259.6,192.0 L313.0,192.0 L366.4,192.0 L419.8,60.3 L473.2,192.0 L526.6,60.3 L580.0,192.0 L580.0,192.0 Z" fill="#eab839" fill-opacity="0.1"/>
<path d="M46.0,192.0 L99.4,192.0 L152.8,192.0 L206.2,60.3 L259.6,192.0 L313.0,192.0 L366.4,192.0 L419.8,60.3 L473.2,192.0 L526.6,60.3 L580.0,192.0" fill="none" stroke="#eab839" stroke-width="2" stroke-linejoin="round"/>
<path d="M46.0,192.0 L46.0,192.0 L99.4,60.3 L152.8,192.0 L206.2,60.3 L259.6,192.0 L313.0,60.3 L366.4,192.0 L419.8,192.0 L473.2,192.0 L526.6,192.0 L580.0,192.0 L580.0,192.0 Z" fill="#6ed0e0" fill-opacity="0.1"/>
<path d="M46.0,192.0 L99.4,60.3 L152.8,192.0 L206.2,60.3 L259.6,192.0 L313.0,60.3 L366.4,192.0 L419.8,192.0 L473.2,192.0 L526.6,192.0 L580.0,192.0" fill="none" stroke="#6ed0e0" stroke-width="2" stroke-linejoin="round"/>
<path d="M46.0,192.0 L46.0,192.0 L99.4,192.0 L152.8,192.0 L206.2,192.0 L259.6,192.0 L313.0,192.0 L366.4,192.0 L419.8,192.0 L473.2,192.0 L526.6,192.0 L580.0,192.0 L580.0,192.0 Z" fill="#ef843c" fill-opacity="0.1"/>
<path d="M46.0,192.0 L99.4,192.0 L152.8,192.0 L206.2,192.0 L259.6,192.0 L313.0,192.0 L366.4,192.0 L419.8,192.0 L473.2,192.0 L526.6,192.0 L580.0,192.0" fill="none" stroke="#ef843c" stroke-width="2" stroke-linejoin="round"/>
</g>
<rect x="34" y="226.5" width="13" height="3.2" rx="1.2" fill="#7eb26d"/>
<text x="51" y="231.5" class="lg">conjure-canonical-kubern-b4d:kubernetes-master-0</text>
<rect x="34" y="244.0" width="13" height="3.2" rx="1.2" fill="#eab839"/>
<text x="51" y="249.0" class="lg">conjure-canonical-kubern-b4d:kubernetes-worker-0</text>
<rect x="34" y="261.5" width="13" height="3.2" rx="1.2" fill="#6ed0e0"/>
<text x="51" y="266.5" class="lg">conjure-canonical-kubern-b4d:kubernetes-worker-1</text>
<rect x="34" y="279.0" width="13" height="3.2" rx="1.2" fill="#ef843c"/>
<text x="51" y="284.0" class="lg">conjure-canonical-kubern-b4d:kubernetes-worker-2</text>
<circle cx="603.5" cy="293" r="1.25" fill="#4e4c4c"/>
<circle cx="600.3" cy="293" r="1.25" fill="#4e4c4c"/>
<circle cx="597.1" cy="293" r="1.25" fill="#4e4c4c"/>
<circle cx="603.5" cy="289.6" r="1.25" fill="#4e4c4c"/>
<circle cx="600.3" cy="289.6" r="1.25" fill="#4e4c4c"/>
<circle cx="603.5" cy="286.1" r="1.25" fill="#4e4c4c"/>
</svg><div class="panel" style="left:626px;top:1157px;width:604px;height:294px"></div>
<svg class="chart" style="left:626px;top:1157px" width="606" height="296" viewBox="0 0 606 296">
<text x="303.0" y="20" class="title" text-anchor="middle">CPU Idle</text>
<line x1="37" x2="580" y1="192.5" y2="192.5" class="g"/>
<text x="32" y="196.8" class="ax" text-anchor="end">0</text>
<line x1="37" x2="580" y1="160.5" y2="160.5" class="g"/>
<text x="32" y="164.8" class="ax" text-anchor="end">25</text>
<line x1="37" x2="580" y1="129.5" y2="129.5" class="g"/>
<text x="32" y="133.8" class="ax" text-anchor="end">50</text>
<line x1="37" x2="580" y1="97.5" y2="97.5" class="g"/>
<text x="32" y="101.8" class="ax" text-anchor="end">75</text>
<line x1="37" x2="580" y1="66.5" y2="66.5" class="g"/>
<text x="32" y="70.8" class="ax" text-anchor="end">100</text>
<line x1="37" x2="580" y1="34.5" y2="34.5" class="g"/>
<text x="32" y="38.8" class="ax" text-anchor="end">125</text>
<line x1="49.5" x2="49.5" y1="34" y2="192" class="g"/>
<text x="50.3" y="209" class="ax" text-anchor="middle">13:19</text>
<line x1="157.5" x2="157.5" y1="34" y2="192" class="g"/>
<text x="158.3" y="209" class="ax" text-anchor="middle">13:20</text>
<line x1="266.5" x2="266.5" y1="34" y2="192" class="g"/>
<text x="267.3" y="209" class="ax" text-anchor="middle">13:21</text>
<line x1="375.5" x2="375.5" y1="34" y2="192" class="g"/>
<text x="376.3" y="209" class="ax" text-anchor="middle">13:22</text>
<line x1="483.5" x2="483.5" y1="34" y2="192" class="g"/>
<text x="484.3" y="209" class="ax" text-anchor="middle">13:23</text>
<clipPath id="c626_1157"><rect x="37" y="32" width="543" height="160"/></clipPath>
<g clip-path="url(#c626_1157)">
<path d="M37.0,192.0 L37.0,185.7 L91.3,71.9 L145.6,72.6 L199.9,70.7 L254.2,128.8 L308.5,71.5 L362.8,74.2 L417.1,134.4 L471.4,188.8 L525.7,71.0 L580.0,75.7 L580.0,192.0 Z" fill="#7eb26d" fill-opacity="0.1"/>
<path d="M37.0,185.7 L91.3,71.9 L145.6,72.6 L199.9,70.7 L254.2,128.8 L308.5,71.5 L362.8,74.2 L417.1,134.4 L471.4,188.8 L525.7,71.0 L580.0,75.7" fill="none" stroke="#7eb26d" stroke-width="2" stroke-linejoin="round"/>
<path d="M37.0,192.0 L37.0,65.6 L91.3,65.6 L145.6,65.6 L199.9,65.6 L254.2,65.6 L308.5,65.6 L362.8,65.6 L417.1,65.6 L471.4,65.6 L525.7,65.6 L580.0,75.0 L580.0,192.0 Z" fill="#eab839" fill-opacity="0.1"/>
<path d="M37.0,65.6 L91.3,65.6 L145.6,65.6 L199.9,65.6 L254.2,65.6 L308.5,65.6 L362.8,65.6 L417.1,65.6 L471.4,65.6 L525.7,65.6 L580.0,75.0" fill="none" stroke="#eab839" stroke-width="2" stroke-linejoin="round"/>
<path d="M37.0,192.0 L37.0,65.6 L91.3,65.6 L145.6,65.6 L199.9,65.6 L254.2,65.6 L308.5,65.6 L362.8,66.1 L417.1,72.4 L471.4,65.6 L525.7,65.6 L580.0,65.6 L580.0,192.0 Z" fill="#6ed0e0" fill-opacity="0.1"/>
<path d="M37.0,65.6 L91.3,65.6 L145.6,65.6 L199.9,65.6 L254.2,65.6 L308.5,65.6 L362.8,66.1 L417.1,72.4 L471.4,65.6 L525.7,65.6 L580.0,65.6" fill="none" stroke="#6ed0e0" stroke-width="2" stroke-linejoin="round"/>
<path d="M37.0,192.0 L37.0,65.6 L91.3,65.6 L145.6,65.6 L199.9,65.6 L254.2,65.6 L308.5,65.6 L362.8,69.8 L417.1,65.6 L471.4,65.6 L525.7,65.6 L580.0,65.6 L580.0,192.0 Z" fill="#ef843c" fill-opacity="0.1"/>
<path d="M37.0,65.6 L91.3,65.6 L145.6,65.6 L199.9,65.6 L254.2,65.6 L308.5,65.6 L362.8,69.8 L417.1,65.6 L471.4,65.6 L525.7,65.6 L580.0,65.6" fill="none" stroke="#ef843c" stroke-width="2" stroke-linejoin="round"/>
</g>
<rect x="34" y="226.5" width="13" height="3.2" rx="1.2" fill="#7eb26d"/>
<text x="51" y="231.5" class="lg">conjure-canonical-kubern-b4d:kubernetes-master-0</text>
<rect x="34" y="244.0" width="13" height="3.2" rx="1.2" fill="#eab839"/>
<text x="51" y="249.0" class="lg">conjure-canonical-kubern-b4d:kubernetes-worker-0</text>
<rect x="34" y="261.5" width="13" height="3.2" rx="1.2" fill="#6ed0e0"/>
<text x="51" y="266.5" class="lg">conjure-canonical-kubern-b4d:kubernetes-worker-1</text>
<rect x="34" y="279.0" width="13" height="3.2" rx="1.2" fill="#ef843c"/>
<text x="51" y="284.0" class="lg">conjure-canonical-kubern-b4d:kubernetes-worker-2</text>
<circle cx="603.5" cy="293" r="1.25" fill="#4e4c4c"/>
<circle cx="600.3" cy="293" r="1.25" fill="#4e4c4c"/>
<circle cx="597.1" cy="293" r="1.25" fill="#4e4c4c"/>
<circle cx="603.5" cy="289.6" r="1.25" fill="#4e4c4c"/>
<circle cx="600.3" cy="289.6" r="1.25" fill="#4e4c4c"/>
<circle cx="603.5" cy="286.1" r="1.25" fill="#4e4c4c"/>
</svg>
</body></html>
